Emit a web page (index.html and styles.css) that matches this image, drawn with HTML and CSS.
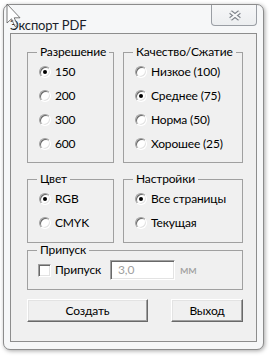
FILE: index.html
```html
<!DOCTYPE html>
<html lang="ru">
<head>
<meta charset="utf-8">
<title>Экспорт PDF</title>
<link rel="stylesheet" href="styles.css">
</head>
<body>
<div class="desk">
  <div class="window">
    <div class="titlebar">
      <span class="title">Экспорт PDF</span>
      <div class="close">
        <svg width="14" height="11" viewBox="0 0 14 11" aria-hidden="true">
          <path d="M2.5 2 L11.5 9 M11.5 2 L2.5 9" stroke="#7f848b" stroke-width="4.2"/>
          <path d="M2.5 2 L11.5 9 M11.5 2 L2.5 9" stroke="#f7f8f9" stroke-width="2.2"/>
        </svg>
      </div>
    </div>
    <div class="client">
      <div class="row">
        <fieldset class="group g-left">
          <legend>Разрешение</legend>
          <div class="opt"><span class="radio checked"></span><span>150</span></div>
          <div class="opt"><span class="radio"></span><span>200</span></div>
          <div class="opt"><span class="radio"></span><span>300</span></div>
          <div class="opt"><span class="radio"></span><span>600</span></div>
        </fieldset>
        <fieldset class="group g-right">
          <legend>Качество/Сжатие</legend>
          <div class="opt"><span class="radio"></span><span>Низкое (100)</span></div>
          <div class="opt"><span class="radio checked"></span><span>Среднее (75)</span></div>
          <div class="opt"><span class="radio"></span><span>Норма (50)</span></div>
          <div class="opt"><span class="radio"></span><span>Хорошее (25)</span></div>
        </fieldset>
      </div>
      <div class="row row2">
        <fieldset class="group g-left g-small">
          <legend>Цвет</legend>
          <div class="opt"><span class="radio checked"></span><span>RGB</span></div>
          <div class="opt"><span class="radio"></span><span>CMYK</span></div>
        </fieldset>
        <fieldset class="group g-right g-small">
          <legend>Настройки</legend>
          <div class="opt"><span class="radio checked"></span><span>Все страницы</span></div>
          <div class="opt"><span class="radio"></span><span>Текущая</span></div>
        </fieldset>
      </div>
      <fieldset class="group g-bleed">
        <legend>Припуск</legend>
        <div class="bleed-row">
          <span class="check"></span>
          <span class="bleed-label">Припуск</span>
          <span class="field">3,0</span>
          <span class="unit">мм</span>
        </div>
      </fieldset>
      <div class="buttons">
        <button class="btn btn-create">Создать</button>
        <button class="btn btn-exit">Выход</button>
      </div>
    </div>
  </div>
  <svg class="cursor" width="16" height="26" viewBox="0 0 16 26" aria-hidden="true">
    <path d="M1 1 L1 20 L5.5 15.8 L9 23.5 L11.6 22.3 L8.2 14.8 L14 14.8 Z" fill="#ffffff" fill-opacity="0.85" stroke="#5a5a5a" stroke-opacity="0.8" stroke-width="1"/>
  </svg>
</div>
</body>
</html>
```
FILE: styles.css
```css
* { box-sizing: border-box; }
html, body { margin: 0; padding: 0; background: #ffffff; }
body {
  font-family: "Lato", "Noto Sans", sans-serif;
  font-size: 12px;
  line-height: 14px;
  letter-spacing: -0.15px;
  color: #000;
}
.desk { position: relative; width: 269px; height: 356px; overflow: hidden; }

.window {
  margin: 4px 0 0 3px;
  width: 261px;
  height: 346px;
  border: 1px solid #8c8c8c;
  border-radius: 7px;
  background: #f6f7f8;
  box-shadow: 1px 1px 4px rgba(0,0,0,0.35);
  padding: 0 6px 7px 6px;
  display: flex;
  flex-direction: column;
}

.titlebar {
  height: 28px;
  display: flex;
  justify-content: space-between;
  align-items: flex-start;
}
.title {
  padding-top: 13px;
  font-size: 13px;
  color: #1b1f2a;
}
.close {
  width: 46px;
  height: 21px;
  border: 1px solid #9a9ea4;
  border-top: none;
  border-radius: 0 0 4px 4px;
  background: linear-gradient(#f6f7f8, #eceef0);
  display: flex;
  align-items: center;
  justify-content: center;
}
.close svg { margin-left: 1px; }

.client {
  height: 309px;
  border: 1px solid #8d8d8d;
  background: #f0f0f0;
  padding: 11px 13px 10px 16px;
  display: flex;
  flex-direction: column;
}

.row { display: flex; gap: 9px; }
.row2, .g-bleed, .buttons { margin-top: 9px; }

.group {
  margin: 0;
  min-width: 0;
  border: 1px solid #a0a0a0;
  padding: 1px 0 6px 0;
}
.group legend {
  margin-left: 9px;
  padding: 0 3px;
  line-height: 14px;
}
.g-left { width: 87px; }
.g-right { width: 120px; }
.g-small { padding-bottom: 7px; }

.opt {
  height: 24px;
  display: flex;
  align-items: center;
  gap: 3px;
  padding-left: 11px;
  white-space: nowrap;
}
.radio {
  width: 12px;
  height: 12px;
  flex: none;
  border-radius: 50%;
  border: 1px solid;
  border-color: #a0a0a0 #ffffff #ffffff #a0a0a0;
  background: #ffffff;
  box-shadow: inset 1px 1px 0 #696969, inset -1px -1px 0 #e3e3e3;
  display: flex;
  align-items: center;
  justify-content: center;
  margin-right: 1px;
}
.radio.checked::after {
  content: "";
  width: 4px;
  height: 4px;
  border-radius: 50%;
  background: #000;
}

.g-bleed { padding: 3px 0 9px 0; }
.bleed-row {
  height: 20px;
  display: flex;
  align-items: center;
  padding-left: 10px;
}
.check {
  width: 13px;
  height: 13px;
  flex: none;
  border: 1px solid;
  border-color: #a0a0a0 #ffffff #ffffff #a0a0a0;
  background: #ffffff;
  box-shadow: inset 1px 1px 0 #696969, inset -1px -1px 0 #e3e3e3;
}
.bleed-label { margin-left: 4px; width: 55px; }
.field {
  width: 65px;
  height: 20px;
  border: 1px solid;
  border-color: #a0a0a0 #ffffff #ffffff #a0a0a0;
  box-shadow: inset 1px 1px 0 #696969, inset -1px -1px 0 #e3e3e3;
  background: #ffffff;
  color: #a0a0a0;
  padding: 2px 0 0 7px;
  line-height: 14px;
}
.unit { margin-left: 5px; color: #a0a0a0; }

.buttons { display: flex; justify-content: space-between; }
.btn {
  font: inherit;
  letter-spacing: inherit;
  color: #000;
  height: 23px;
  margin: 0;
  padding: 0;
  border: 1px solid;
  border-color: #ffffff #696969 #696969 #ffffff;
  box-shadow: inset -1px -1px 0 #a0a0a0, inset 1px 1px 0 #e3e3e3;
  background: #f0f0f0;
  border-radius: 0;
}
.btn-create { width: 121px; }
.btn-exit { width: 72px; }

.cursor { position: absolute; left: 6px; top: 3px; }
```
